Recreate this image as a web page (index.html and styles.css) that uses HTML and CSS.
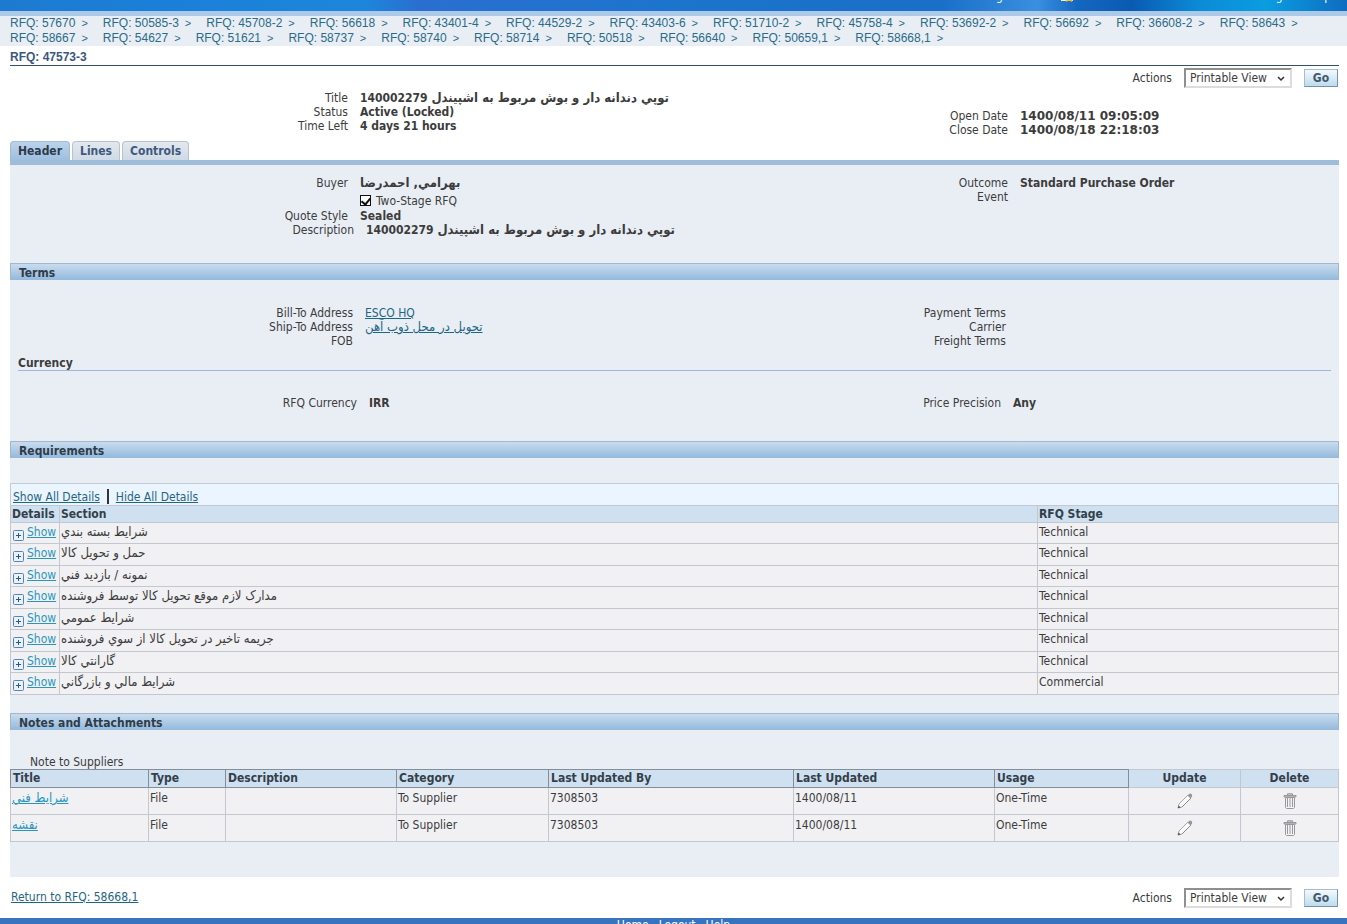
FILE: index.html
```
<!DOCTYPE html>
<html lang="en">
<head>
<meta charset="utf-8">
<title>RFQ: 47573-3</title>
<link rel="stylesheet" href="styles.css">
</head>
<body>
<svg class="defs" aria-hidden="true">
  <symbol id="plus" viewBox="0 0 11 11"><rect x=".5" y=".5" width="10" height="10" rx="1" fill="#e8f2fc" stroke="#5585b8"/><path d="M3 5.500h5M5.500 3v5" stroke="#33567e" fill="none"/></symbol>
  <symbol id="pencil" viewBox="0 0 16 16"><path d="M1 15l1-4L11 2l3 3L5 14z" fill="#fafafa" stroke="#a8a8ac"/><path d="M10.500 2.500l2-1.800c1.500-.6 3.200 1 2.500 2.700L13.500 5.500z" fill="#98989c"/><path d="M.8 15.200l.8-2.800L3.800 14.400z" fill="#555"/><path d="M5 14L14 5" stroke="#88888c" fill="none"/></symbol>
  <symbol id="trash" viewBox="0 0 14 16"><path d="M4.500 2V.8h5V2M1 4V2.500h12V4z" fill="#ccc" stroke="#98989c"/><path d="M2.500 4.500h9v10l-1 1h-7l-1-1z" fill="#f4f4f4" stroke="#98989c"/><path d="M4.500 5v9M7 5v9M9.500 5v9" stroke="#98989c" fill="none"/></symbol>
  <symbol id="chevron" viewBox="0 0 8 6"><path d="M1 1l3 3 3-3" fill="none" stroke="#333" stroke-width="1.500"/></symbol>
  <symbol id="folder" viewBox="0 0 14 14"><path d="M0 3h5l1 2h6v7H0z" fill="#f5ecc0"/><path d="M8 4l1.500 3 3.500.5-2.500 2.200.6 3.300L8 11.500 5 13l.6-3.300L3 7.500 6.500 7z" fill="#f5b81c"/></symbol>
</svg>

<header class="banner">
  <nav class="banner-nav" aria-label="Global">
    <a href="#">Navigator</a>
    <a href="#" class="favorites"><svg class="icon-folder"><use href="#folder"/></svg>Favorites</a>
    <a href="#" class="push">Logout</a>
    <a href="#">Help</a>
  </nav>
</header>

<nav class="crumbs" aria-label="Breadcrumb">
  <a href="#">RFQ: 57670</a><a href="#">RFQ: 50585-3</a><a href="#">RFQ: 45708-2</a><a href="#">RFQ: 56618</a><a href="#">RFQ: 43401-4</a><a href="#">RFQ: 44529-2</a><a href="#">RFQ: 43403-6</a><a href="#">RFQ: 51710-2</a><a href="#">RFQ: 45758-4</a><a href="#">RFQ: 53692-2</a><a href="#">RFQ: 56692</a><a href="#">RFQ: 36608-2</a><a href="#">RFQ: 58643</a><a href="#">RFQ: 58667</a><a href="#">RFQ: 54627</a><a href="#">RFQ: 51621</a><a href="#">RFQ: 58737</a><a href="#">RFQ: 58740</a><a href="#">RFQ: 58714</a><a href="#">RFQ: 50518</a><a href="#">RFQ: 56640</a><a href="#">RFQ: 50659,1</a><a href="#">RFQ: 58668,1</a>
</nav>

<main class="page">
  <h1 class="page-title">RFQ: 47573-3</h1>

  <form class="actions">
    <label for="action-top">Actions</label>
    <span class="picker"><select id="action-top"><option>Printable View</option></select><svg class="chevron"><use href="#chevron"/></svg></span>
    <button type="button" class="go">Go</button>
  </form>

  <div class="facts summary">
    <dl>
      <dt>Title</dt><dd>140002279 <span lang="fa">توپي دندانه دار و بوش مربوط به اشپيندل</span></dd>
      <dt>Status</dt><dd>Active (Locked)</dd>
      <dt>Time Left</dt><dd>4 days 21 hours</dd>
    </dl>
    <dl class="dates">
      <dt>Open Date</dt><dd>1400/08/11 09:05:09</dd>
      <dt>Close Date</dt><dd>1400/08/18 22:18:03</dd>
    </dl>
  </div>

  <nav class="tabs" aria-label="Sections">
    <a href="#" class="tab current">Header</a>
    <a href="#" class="tab">Lines</a>
    <a href="#" class="tab">Controls</a>
  </nav>

  <div class="panel">
    <div class="facts overview">
      <div>
        <dl>
          <dt>Buyer</dt><dd><span lang="fa">بهرامي, احمدرضا</span></dd>
          <dt></dt><dd class="check"><input type="checkbox" id="two-stage" checked><label for="two-stage">Two-Stage RFQ</label></dd>
          <dt>Quote Style</dt><dd>Sealed</dd>
        </dl>
        <dl class="description">
          <dt>Description</dt><dd>140002279 <span lang="fa">توپي دندانه دار و بوش مربوط به اشپيندل</span></dd>
        </dl>
      </div>
      <dl>
        <dt>Outcome</dt><dd>Standard Purchase Order</dd>
        <dt>Event</dt><dd></dd>
      </dl>
    </div>

    <h2 class="bar">Terms</h2>
    <div class="facts terms">
      <dl>
        <dt>Bill-To Address</dt><dd><a href="#">ESCO HQ</a></dd>
        <dt>Ship-To Address</dt><dd><a href="#" lang="fa">تحويل در محل ذوب آهن</a></dd>
        <dt>FOB</dt><dd></dd>
      </dl>
      <dl>
        <dt>Payment Terms</dt><dd></dd>
        <dt>Carrier</dt><dd></dd>
        <dt>Freight Terms</dt><dd></dd>
      </dl>
    </div>
    <h3 class="subhead">Currency</h3>
    <div class="facts currency">
      <dl><dt>RFQ Currency</dt><dd>IRR</dd></dl>
      <dl><dt>Price Precision</dt><dd>Any</dd></dl>
    </div>

    <h2 class="bar">Requirements</h2>
    <div class="table-tools"><a href="#">Show All Details</a><span class="divider"></span><a href="#">Hide All Details</a></div>
    <table class="grid requirements">
      <colgroup><col class="c-details"><col><col class="c-stage"></colgroup>
      <thead><tr><th>Details</th><th>Section</th><th>RFQ Stage</th></tr></thead>
      <tbody>
        <tr><td><a href="#" class="show"><svg class="plus"><use href="#plus"/></svg>Show</a></td><td><span lang="fa">شرايط بسته بندي</span></td><td>Technical</td></tr>
        <tr><td><a href="#" class="show"><svg class="plus"><use href="#plus"/></svg>Show</a></td><td><span lang="fa">حمل و تحويل کالا</span></td><td>Technical</td></tr>
        <tr><td><a href="#" class="show"><svg class="plus"><use href="#plus"/></svg>Show</a></td><td><span lang="fa">نمونه / بازديد فني</span></td><td>Technical</td></tr>
        <tr><td><a href="#" class="show"><svg class="plus"><use href="#plus"/></svg>Show</a></td><td><span lang="fa">مدارک لازم موقع تحويل کالا توسط فروشنده</span></td><td>Technical</td></tr>
        <tr><td><a href="#" class="show"><svg class="plus"><use href="#plus"/></svg>Show</a></td><td><span lang="fa">شرايط عمومي</span></td><td>Technical</td></tr>
        <tr><td><a href="#" class="show"><svg class="plus"><use href="#plus"/></svg>Show</a></td><td><span lang="fa">جريمه تاخير در تحويل کالا از سوي فروشنده</span></td><td>Technical</td></tr>
        <tr><td><a href="#" class="show"><svg class="plus"><use href="#plus"/></svg>Show</a></td><td><span lang="fa">گارانتي کالا</span></td><td>Technical</td></tr>
        <tr><td><a href="#" class="show"><svg class="plus"><use href="#plus"/></svg>Show</a></td><td><span lang="fa">شرايط مالي و بازرگاني</span></td><td>Commercial</td></tr>
      </tbody>
    </table>

    <h2 class="bar">Notes and Attachments</h2>
    <p class="note">Note to Suppliers</p>
    <table class="grid attachments">
      <colgroup><col class="a-title"><col class="a-type"><col class="a-desc"><col class="a-cat"><col class="a-by"><col class="a-date"><col class="a-usage"><col class="a-update"><col class="a-delete"></colgroup>
      <thead><tr><th class="sort">Title</th><th class="sort">Type</th><th class="sort">Description</th><th class="sort">Category</th><th class="sort">Last Updated By</th><th class="sort">Last Updated</th><th class="sort">Usage</th><th class="mid">Update</th><th class="mid">Delete</th></tr></thead>
      <tbody>
        <tr><td><a href="#" lang="fa">شرايط فني</a></td><td>File</td><td></td><td>To Supplier</td><td>7308503</td><td>1400/08/11</td><td>One-Time</td><td class="mid"><button type="button" class="tool" aria-label="Update"><svg><use href="#pencil"/></svg></button></td><td class="mid"><button type="button" class="tool" aria-label="Delete"><svg><use href="#trash"/></svg></button></td></tr>
        <tr><td><a href="#" lang="fa">نقشه</a></td><td>File</td><td></td><td>To Supplier</td><td>7308503</td><td>1400/08/11</td><td>One-Time</td><td class="mid"><button type="button" class="tool" aria-label="Update"><svg><use href="#pencil"/></svg></button></td><td class="mid"><button type="button" class="tool" aria-label="Delete"><svg><use href="#trash"/></svg></button></td></tr>
      </tbody>
    </table>
  </div>

  <div class="bottom">
    <a href="#">Return to RFQ: 58668,1</a>
    <form class="actions">
      <label for="action-bottom">Actions</label>
      <span class="picker"><select id="action-bottom"><option>Printable View</option></select><svg class="chevron"><use href="#chevron"/></svg></span>
      <button type="button" class="go">Go</button>
    </form>
  </div>
</main>

<footer class="footer"><a href="#">Home</a><a href="#">Logout</a><a href="#">Help</a></footer>
</body>
</html>
```
FILE: styles.css
```
* { box-sizing: border-box; }
body {
  margin: 0;
  background: #fff;
  color: #3c3c3c;
  font: 12px/14px "DejaVu Sans Condensed", "DejaVu Sans", sans-serif;
}
a { color: #1f6584; }
dl, dd, h1, h2, h3, p { margin: 0; }
[lang="fa"] { font-size: 13px; line-height: 12px; }
.defs { display: none; }

.banner {
  height: 16px;
  overflow: hidden;
  border-bottom: 5px solid #adc9e8;
  background: linear-gradient(90deg, #1e7ad0 0, #1a7fd9 12%, #1d86dc 27%, #2a6fd0 31%, #1c74cd 50%, #1a6fc8 70%, #3a8fe0 77%, #1467c0 80%, #0a5ab2 84%, #0c8bd6 89%, #0a9de0 94%, #0f6cc0 100%);
}
.banner-nav {
  display: flex;
  gap: 32px;
  margin-top: -11px;
  padding: 0 16px 0 972px;
}
.banner-nav a { display: flex; color: #fff; text-decoration: none; }
.banner-nav .push { margin-left: auto; }
.banner-nav .push + a { margin-left: -26px; }
.icon-folder { width: 14px; height: 14px; margin: 0 4px; }

.crumbs {
  display: flex;
  flex-wrap: wrap;
  padding: 0 10px;
  background: #e9eef5;
  font: 12px/15px "Liberation Sans", Arial, sans-serif;
}
.crumbs a { margin-right: 15px; color: #2a6b88; text-decoration: none; }
.crumbs a::after { content: ">"; margin-left: 6px; font-size: 11px; }

.page { padding: 0 8px 0 10px; }
.page-title {
  padding: 4px 0 1px;
  border-bottom: 1px solid #34506e;
  color: #3b5680;
  font: bold 12px/14px "Liberation Sans", Arial, sans-serif;
}

.actions { display: flex; align-items: center; justify-content: flex-end; gap: 12px; padding: 2px 1px 0 0; }
.picker { position: relative; }
.picker select {
  display: block;
  width: 108px;
  height: 20px;
  padding: 0 4px;
  appearance: none;
  border: 2px solid;
  border-color: #8f8f8f #dcdcdc #dcdcdc #8f8f8f;
  border-radius: 0;
  background: #fff;
  color: #3c3c3c;
  font: inherit;
}
.chevron { position: absolute; right: 7px; top: 8px; width: 8px; height: 6px; pointer-events: none; }
.go {
  width: 34px;
  height: 18px;
  padding: 0;
  border: 1px solid #86a0b8;
  border-color: #a9bccd #7891a8 #7891a8 #a9bccd;
  background: linear-gradient(#f4f9fd, #bcdcee);
  color: #44596e;
  font: inherit;
  font-weight: bold;
}

.facts { display: grid; grid-template-columns: 660fr 669fr; --left: 338fr 322fr; --right: 338fr 331fr; }
.facts dl { display: grid; grid-template-columns: var(--left); align-content: start; grid-auto-rows: minmax(14px, auto); }
.facts > dl:last-child { grid-template-columns: var(--right); }
.facts dt { text-align: right; }
.facts dd { min-width: 0; padding-left: 12px; font-weight: bold; white-space: nowrap; }
.facts dd a { font-weight: normal; }
.summary { padding: 3px 0 4px; }
.dates { padding-top: 18px; }
.dates dd { font-family: "DejaVu Sans", sans-serif; }

.tabs { display: flex; gap: 2px; border-bottom: 5px solid #9fbcda; }
.tab {
  height: 19px;
  padding: 2px 7px;
  border: 1px solid #b9c3cd;
  border-bottom: 0;
  border-radius: 4px 4px 0 0;
  background: linear-gradient(#e3e8ee, #cfdae6);
  color: #40597e;
  font-weight: bold;
  text-decoration: none;
}
.tab.current { border-color: #9fbcda; background: linear-gradient(#bcd3ea, #9fbfdf); color: #2b3b4c; }

.panel { padding-bottom: 35px; background: #e9eef5; }
.overview { padding: 11px 0 26px; }
.overview .check { display: flex; align-items: center; gap: 5px; height: 19px; padding-top: 2px; font-weight: normal; }
.overview .description { grid-template-columns: 344fr 316fr; }
.check input {
  display: grid;
  place-items: center;
  width: 11px;
  height: 11px;
  margin: 0;
  appearance: none;
  border: 1px solid #111;
  background: #fff;
}
.check input:checked::after {
  content: "";
  width: 4px;
  height: 7px;
  margin-bottom: 2px;
  border: solid #111;
  border-width: 0 2px 2px 0;
  transform: rotate(40deg);
}

.bar {
  padding: 2px 8px 0;
  border: 1px solid #a3b8cf;
  border-bottom: 0;
  background: linear-gradient(#c9dcee, #93b9dc);
  color: #2f3d4a;
  font: inherit;
  font-weight: bold;
}
.terms { padding: 26px 0 8px; --left: 343fr 317fr; --right: 336fr 333fr; }
.subhead { margin: 0 8px; border-bottom: 1px solid #9bb9d8; font: inherit; font-weight: bold; }
.currency { padding: 25px 0 31px; --left: 347fr 313fr; --right: 331fr 338fr; }

.table-tools {
  display: flex;
  align-items: center;
  gap: 7px;
  height: 22px;
  margin-top: 25px;
  padding: 4px 2px 0;
  border: 1px solid #c3ccd6;
  border-bottom: 0;
  background: #ebf5ff;
}
.divider { width: 2px; height: 15px; background: #333; }

.grid { width: 100%; table-layout: fixed; border-collapse: collapse; background: #f1f1f4; }
.grid th, .grid td { padding: 0 1px; border: 1px solid #c3c8d0; text-align: left; vertical-align: top; white-space: nowrap; }
.grid th { background: #cfe0f0; color: #333f4a; }
.grid td a { color: #2b96bd; }
.requirements { margin-bottom: 18px; }
.requirements th { height: 17px; padding-top: 1px; }
.requirements td { height: 21px; padding-top: 2px; }
.requirements tr:nth-child(even) td { height: 22px; }
.c-details { width: 49px; }
.c-stage { width: 301px; }
.show { display: flex; gap: 3px; padding-left: 1px; }
.plus { flex: none; width: 11px; height: 11px; margin-top: 5px; }

.note { padding: 25px 20px 0; }
.attachments th { height: 18px; padding: 1px 2px; }
.attachments td { height: 27px; padding-top: 3px; }
.grid .sort { border: 1px solid #858d98; }
.grid .mid { text-align: center; }
.a-title { width: 138px; }
.a-type { width: 77px; }
.a-desc { width: 171px; }
.a-cat { width: 152px; }
.a-by { width: 245px; }
.a-date { width: 201px; }
.a-usage { width: 134px; }
.a-update { width: 112px; }
.tool { padding: 2px 0 0; border: 0; background: none; }
.tool svg { display: block; width: 16px; height: 16px; }

.bottom { display: flex; align-items: center; justify-content: space-between; padding: 9px 1px 10px; }
.bottom .actions { padding: 2px 0 0; }

.footer {
  display: flex;
  justify-content: center;
  gap: 10px;
  height: 7px;
  overflow: hidden;
  background: #3873c0;
}
.footer a { color: #fff; text-decoration: none; }
```
